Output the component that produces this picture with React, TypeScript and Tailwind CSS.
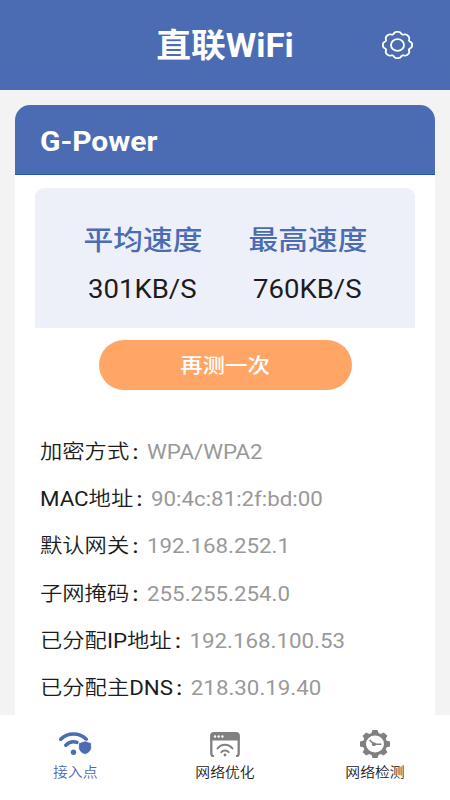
import type { ReactNode } from 'react';

const details = [
  { label: ['加密方式'], value: 'WPA/WPA2' },
  { label: ['MAC', '地址'], value: '90:4c:81:2f:bd:00' },
  { label: ['默认网关'], value: '192.168.252.1' },
  { label: ['子网掩码'], value: '255.255.254.0' },
  { label: ['已分配', 'IP', '地址'], value: '192.168.100.53' },
  { label: ['已分配主', 'DNS'], value: '218.30.19.40' },
];

const isLatin = (text: string) => /^[A-Z]+$/.test(text);

// Wavy outline with eight broad lobes and narrow dips
const gearOutline = Array.from({ length: 160 }, (_, i) => {
  const angle = (i / 160) * Math.PI * 2;
  const r = 12.5 + 0.95 * Math.cos(angle * 8) - 0.25 * Math.cos(angle * 16);
  return `${(14 + r * Math.sin(angle)).toFixed(2)},${(14 - r * Math.cos(angle)).toFixed(2)}`;
}).join(' ');

function SettingsIcon() {
  return (
    <svg
      className="h-7 w-[31px] overflow-visible"
      viewBox="0 0 28 28"
      preserveAspectRatio="none"
      fill="none"
      stroke="#fff"
      strokeWidth="1.7"
      strokeLinejoin="round"
    >
      <polygon points={gearOutline} />
      <circle cx="14" cy="14" r="5.9" />
    </svg>
  );
}

function AccessIcon() {
  return (
    <svg className="h-6 w-[34px]" viewBox="0 0 34 24" fill="none">
      <path d="M2.7 7.2C9.5 .2 21.500 .2 28.300 7.200" stroke="#4b6cb3" strokeWidth="3.600" strokeLinecap="round" />
      <path d="M7.800 13.200C11 9.900 15.500 9.200 19 10.400" stroke="#4b6cb3" strokeWidth="3.600" strokeLinecap="round" />
      <circle cx="15.500" cy="20.300" r="2.700" fill="#4b6cb3" />
      <path d="M27 8.800L33.400 11V15.500C33.400 19 30.500 21.300 27 22.500C23.500 21.300 20.600 19 20.600 15.500V11Z" fill="#4b6cb3" stroke="#fff" strokeWidth=".8" />
    </svg>
  );
}

function OptimizeIcon() {
  return (
    <svg className="h-[25px] w-[30px]" viewBox="0 0 30 25" fill="none">
      <path d="M4 24.200C2 24.200 1.300 23 1.300 21.500V4C1.300 2.200 2.500 1.200 4.200 1.200H25.800C27.500 1.200 28.700 2.200 28.700 4V21.500C28.700 23 28 24.200 26 24.200" stroke="#808080" strokeWidth="2.300" />
      <path d="M.5 8.500V4C.5 1.500 2.200.300 4.200.300H25.800C27.800.300 29.500 1.500 29.500 4V8.500Z" fill="#808080" />
      <circle cx="5" cy="4.500" r="1.200" fill="#fff" />
      <circle cx="8.700" cy="4.500" r="1.200" fill="#fff" />
      <circle cx="12.400" cy="4.500" r="1.200" fill="#fff" />
      <path d="M7.500 16.500C11.500 11.500 18.500 11.500 22.500 16.500M11.300 20.100C13.200 18 16.800 18 18.700 20.100" stroke="#808080" strokeWidth="2" strokeLinecap="round" />
      <circle cx="15" cy="23" r="1.400" fill="#808080" />
    </svg>
  );
}

function DetectIcon() {
  return (
    <svg className="h-7 w-[30px]" viewBox="0 0 28 28" preserveAspectRatio="none" fill="none">
      {[0, 45, 90, 135].map((angle) => (
        <path key={angle} d="M11.600 0H16.400L17.600 4V24L16.400 28H11.600L10.400 24V4Z" fill="#808080" transform={`rotate(${angle} 14 14)`} />
      ))}
      <circle cx="14" cy="14" r="11.300" fill="#808080" />
      <circle cx="14" cy="14" r="8.400" fill="#fff" />
      <path d="M9 10L13 14.200H20" stroke="#808080" strokeWidth="1.500" />
      <circle cx="13" cy="14.200" r="1.900" fill="#808080" />
    </svg>
  );
}

function Speed({ title, value }: { title: string; value: string }) {
  return (
    <div className="flex w-[165px] flex-col items-center">
      <div className="scale-x-110 whitespace-nowrap text-[27px] leading-[40px] font-medium text-[#4b6cb3]">{title}</div>
      <div className="mt-2 scale-x-108 whitespace-nowrap text-[25.500px] leading-[40px] text-[#1c1c1c]">{value}</div>
    </div>
  );
}

function Tab({ icon, label, active }: { icon: ReactNode; label: string; active?: boolean }) {
  return (
    <div className="flex w-[150px] flex-col items-center">
      <div className="flex h-[30px] items-center justify-center">{icon}</div>
      <div className={`mt-[3px] scale-x-110 text-[13.500px] leading-[20px] font-[350] ${active ? 'text-[#4b6cb3]' : 'text-[#222]'}`}>
        {label}
      </div>
    </div>
  );
}

export default function App() {
  return (
    <div className="flex h-[800px] w-[450px] flex-col overflow-hidden bg-[#f3f3f3] font-[Roboto,'Noto_Sans_CJK_SC',sans-serif]">
      {/* Title bar */}
      <header className="grid h-[90px] shrink-0 grid-cols-[70px_1fr_70px] items-center bg-[#4b6cb3] px-[18px]">
        <span />
        <h1 className="scale-x-107 pt-[2px] text-center text-[32.500px] leading-[40px] font-bold text-white">直联WiFi</h1>
        <button className="flex justify-end pr-[19px] pb-px">
          <SettingsIcon />
        </button>
      </header>

      {/* Network card */}
      <main className="mx-[15px] mt-[15px] flex flex-1 flex-col overflow-hidden rounded-t-[15px] bg-white">
        <div className="flex h-[70px] shrink-0 items-center border-b border-[#2058b0] bg-[#4b6cb3] pt-1 pl-[25px]">
          <span className="origin-left scale-x-111 text-[27px] leading-[40px] font-bold text-white">G-Power</span>
        </div>

        <div className="mx-5 mt-[13px] flex h-[140px] shrink-0 justify-center rounded-t-[9px] bg-[#edf0f9] pt-[33px]">
          <Speed title="平均速度" value="301KB/S" />
          <Speed title="最高速度" value="760KB/S" />
        </div>

        <button className="mx-auto mt-3 flex h-[50px] w-[253px] shrink-0 items-center justify-center rounded-full bg-[#ffa666] pt-px text-[20px] font-medium text-white">
          <span className="scale-x-112">再测一次</span>
        </button>

        <div className="mt-[38px] pl-[25px]">
          {details.map(({ label, value }) => (
            <div key={value} className="flex h-[47.200px] w-max origin-left scale-x-[1.115] items-center pt-px text-[20px] leading-[30px] text-[#1c1c1c]">
              {label.map((part) => (
                <span key={part} className={isLatin(part) ? 'font-normal' : 'font-[350]'}>
                  {part}
                </span>
              ))}
              <span className="ml-[3px] w-[13px] font-medium">:</span>
              <span className="text-[#999]">{value}</span>
            </div>
          ))}
        </div>
      </main>

      {/* Bottom tabs */}
      <nav className="flex h-[85px] shrink-0 bg-white pt-[14px]">
        <Tab icon={<AccessIcon />} label="接入点" active />
        <Tab icon={<OptimizeIcon />} label="网络优化" />
        <Tab icon={<DetectIcon />} label="网络检测" />
      </nav>
    </div>
  );
}
